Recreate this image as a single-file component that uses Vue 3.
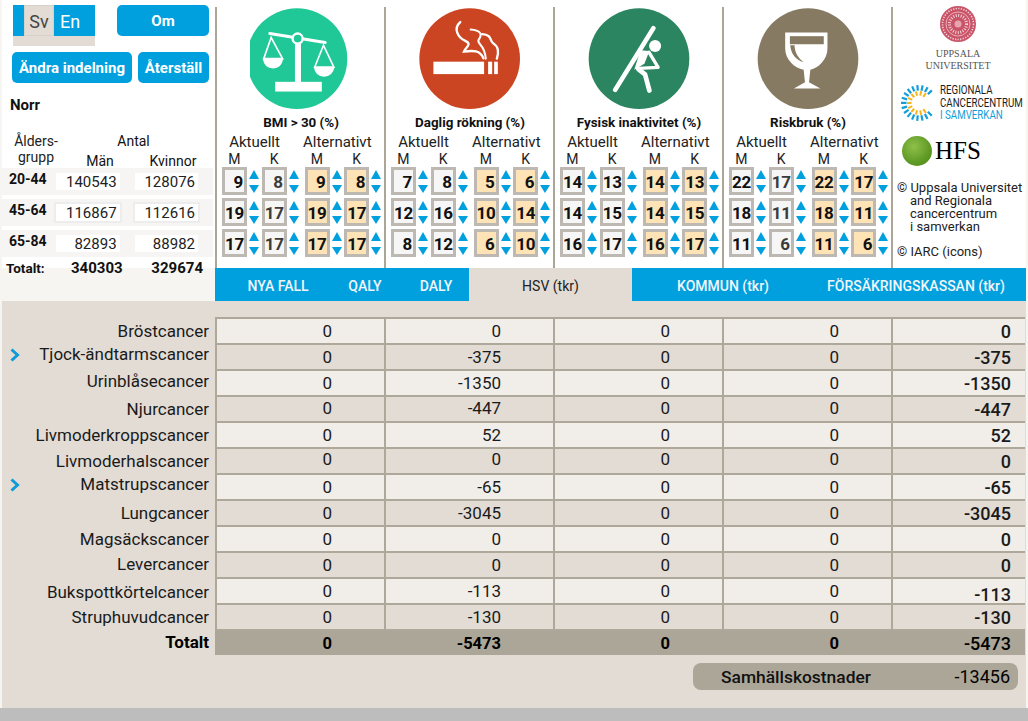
<template>
  <div class="page">
    <div class="top">
      <!-- vänster panel -->
      <div class="side">
        <div class="btn-row first">
          <div class="lang">
            <div class="lang-bar">
              <span class="lang-sv">Sv</span>
              <span class="lang-en">En</span>
            </div>
          </div>
          <button class="btn om">Om</button>
        </div>
        <div class="btn-row second">
          <button class="btn change">Ändra indelning</button>
          <button class="btn reset">Återställ</button>
        </div>
        <div class="region">Norr</div>
        <div class="pop-head">
          <div class="age-head">Ålders-<br />grupp</div>
          <div class="count-head">
            <div class="antal">Antal</div>
            <div class="sex"><span>Män</span><span>Kvinnor</span></div>
          </div>
        </div>
        <div v-for="(p, i) in population" :key="p.age" class="pop-row" :class="{ framed: i === 1 }">
          <b>{{ p.age }}</b>
          <span class="pop-val">{{ p.men }}</span>
          <span class="pop-val">{{ p.women }}</span>
        </div>
        <div class="pop-total">
          <span class="total-label">Totalt:</span>
          <span class="total-val">340303</span>
          <span class="total-val">329674</span>
        </div>
      </div>

      <!-- riskfaktorer -->
      <div v-for="f in factors" :key="f.title" class="factor">
        <svg class="factor-icon" :viewBox="f.box" width="102" height="102">
          <circle :cx="f.cx" cy="175" r="150" :fill="f.color" />
          <g v-if="f.id === 'bmi'">
            <path d="M165 100 L330 127" stroke="#fff" stroke-width="9" stroke-linecap="round" />
            <rect x="240" y="130" width="18" height="116" fill="#fff" />
            <rect x="181" y="244" width="139" height="29" fill="#fff" />
            <circle cx="248" cy="115" r="15" :fill="f.color" stroke="#fff" stroke-width="7" />
            <path d="M169 112 L147 175 H203 Z M325 135 L299 200 H356 Z" fill="none" stroke="#fff" stroke-width="5" />
            <path d="M144 175 H205 Q200 204 175 204 Q149 204 144 175 Z M296 200 H358 Q352 229 327 229 Q301 229 296 200 Z" fill="#fff" />
          </g>
          <g v-else-if="f.id === 'smoke'">
            <rect x="657" y="184" width="151" height="37" fill="#fff" />
            <rect x="820" y="184" width="12" height="37" fill="#fff" />
            <rect x="838" y="184" width="11" height="37" fill="#fff" />
            <path d="M737 66 C715 85 730 112 752 122 C774 132 752 142 748 154 C775 150 797 150 806 174" fill="none" stroke="#fff" stroke-width="7" stroke-linecap="round" />
            <path d="M768 88 C797 90 804 102 792 118 C784 132 810 130 813 175" fill="none" stroke="#fff" stroke-width="6" stroke-linecap="round" />
            <path d="M802 102 C832 104 824 120 834 128 C852 140 852 155 846 175" fill="none" stroke="#fff" stroke-width="7" stroke-linecap="round" />
          </g>
          <g v-else-if="f.id === 'move'">
            <path d="M295 84 L181 268" stroke="#fff" stroke-width="14" stroke-linecap="round" />
            <circle cx="300" cy="137" r="18" fill="#fff" />
            <path d="M256 150 L283 152 L268 190 L238 208 Z" fill="#fff" />
            <path d="M282 156 L309 201 L250 204" fill="none" stroke="#fff" stroke-width="10" stroke-linejoin="round" stroke-linecap="round" />
            <path d="M250 206 L270 222 L283 270" fill="none" stroke="#fff" stroke-width="14" stroke-linecap="round" stroke-linejoin="round" />
          </g>
          <g v-else>
            <path d="M691 97 H817 V145 C817 178 790 203 766 208 L762 245 L796 264 H717 L750 245 L746 208 C718 203 691 178 691 145 Z" fill="#fff" />
            <rect x="705" y="108" width="101" height="24" :fill="f.color" />
            <path d="M706 135 C708 160 722 178 746 186 C726 170 719 152 719 135 Z" :fill="f.color" />
          </g>
        </svg>
        <div class="factor-title">{{ f.title }}</div>
        <div class="heads">
          <span class="head">Aktuellt</span>
          <span class="head alt">Alternativt</span>
        </div>
        <div class="spin-row">
          <span v-for="(s, i) in sexes" :key="i" class="sex-cell" :class="{ 'group-start': i === 2 }">{{ s }}</span>
        </div>
        <div v-for="(row, r) in f.values" :key="r" class="spin-row boxes">
          <div v-for="(v, i) in row" :key="i" class="spin" :class="{ 'group-start': i === 2 }">
            <div class="box" :class="{ orange: i > 1, dim: f.dim && i === 1 }">{{ v }}</div>
            <div class="arrows"><i class="up"></i><i class="down"></i></div>
          </div>
        </div>
      </div>

      <!-- logotyper -->
      <div class="logos">
        <svg class="seal" viewBox="0 0 36 36" width="36" height="36">
          <circle cx="18" cy="18" r="18" fill="#c95468" />
          <circle cx="18" cy="18" r="15.5" fill="none" stroke="#f3d5da" stroke-width="1.6" stroke-dasharray="1.2 1.4" />
          <circle cx="18" cy="18" r="12" fill="none" stroke="#f0c6cd" stroke-width="0.8" />
          <circle cx="18" cy="18" r="8.5" fill="none" stroke="#f3d5da" stroke-width="3" stroke-dasharray="1 1.5" />
          <circle cx="18" cy="18" r="3.5" fill="#e6a5b0" />
        </svg>
        <div class="uu">UPPSALA<br />UNIVERSITET</div>
        <div class="rcc">
          <svg viewBox="-18 -18 36 36" width="36" height="36">
            <rect v-for="(a, i) in outerSpokes" :key="'o' + i" x="12.5" y="-1.1" width="5.5" height="2.2" fill="#129ed9" :transform="`rotate(${a})`" />
            <rect v-for="(a, i) in innerSpokes" :key="'n' + i" x="7.5" y="-1" width="4.5" height="2" fill="#f8b31c" :transform="`rotate(${a})`" />
          </svg>
          <div class="rcc-text">REGIONALA<br />CANCERCENTRUM<br /><span>I SAMVERKAN</span></div>
        </div>
        <div class="hfs">
          <span class="ball"></span>
          <span class="hfs-text">HFS</span>
        </div>
        <div class="credit">
          <div>© Uppsala Universitet</div>
          <div class="indent">and Regionala<br />cancercentrum<br />i samverkan</div>
          <div class="iarc">© IARC (icons)</div>
        </div>
      </div>
    </div>

    <!-- flikar -->
    <div class="tabs">
      <div v-for="t in tabs" :key="t.id" class="tab" :class="[t.id, { active: t.active }]">{{ t.label }}</div>
    </div>

    <div class="body">
      <div class="grid">
        <template v-for="(r, i) in rows" :key="r.name">
          <div class="name-cell" :class="{ bold: r.total }">
            <svg v-if="r.more" class="chevron" viewBox="0 0 10 14" width="10" height="14">
              <path d="M1.5 1.5 L7.5 7 L1.5 12.5" fill="none" stroke="#0f9ad8" stroke-width="3" />
            </svg>
            <span class="name" :style="{ transform: `translateY(${r.dy}px)` }">{{ r.name }}</span>
          </div>
          <div
            v-for="(v, c) in r.vals"
            :key="c"
            class="cell"
            :class="{ even: i % 2 === 1, total: r.total, sum: c === 4 }"
          >
            <span :style="{ transform: `translateY(${c === 4 ? r.sumDy : r.valDy}px)` }">{{ v }}</span>
          </div>
        </template>
      </div>
      <div class="society">
        <span class="society-label">Samhällskostnader</span>
        <span class="society-val">-13456</span>
      </div>
    </div>
    <div class="foot"></div>
  </div>
</template>

<script setup>
const sexes = ['M', 'K', 'M', 'K']

const population = [
  { age: '20-44', men: 140543, women: 128076 },
  { age: '45-64', men: 116867, women: 112616 },
  { age: '65-84', men: 82893, women: 88982 }
]

const factors = [
  {
    id: 'bmi', title: 'BMI > 30 (%)', color: '#20c897', box: '106 24 304 304', cx: 246, dim: true,
    values: [[9, 8, 9, 8], [19, 17, 19, 17], [17, 17, 17, 17]]
  },
  {
    id: 'smoke', title: 'Daglig rökning (%)', color: '#cc4522', box: '614 24 304 304', cx: 765,
    values: [[7, 8, 5, 6], [12, 16, 10, 14], [8, 12, 6, 10]]
  },
  {
    id: 'move', title: 'Fysisk inaktivitet (%)', color: '#2a8560', box: '100 24 304 304', cx: 252,
    values: [[14, 13, 14, 13], [14, 15, 14, 15], [16, 17, 16, 17]]
  },
  {
    id: 'glass', title: 'Riskbruk (%)', color: '#877a62', box: '607 24 304 304', cx: 759, dim: true,
    values: [[22, 17, 22, 17], [18, 11, 18, 11], [11, 6, 11, 6]]
  }
]

// C-formad logotyp, ekrarna går runt vänster sida
const outerSpokes = Array.from({ length: 17 }, (_, i) => 45 + i * 16.9)
const innerSpokes = Array.from({ length: 11 }, (_, i) => 55 + i * 25)

const tabs = [
  { id: 't-fall', label: 'NYA FALL' },
  { id: 't-qaly', label: 'QALY' },
  { id: 't-daly', label: 'DALY' },
  { id: 't-hsv', label: 'HSV (tkr)', active: true },
  { id: 't-kommun', label: 'KOMMUN (tkr)' },
  { id: 't-fk', label: 'FÖRSÄKRINGSKASSAN (tkr)' }
]

const row = (name, v, dy, valDy = 0, sumDy = 0, more = false) => ({
  name, vals: [0, v, 0, 0, v], dy, valDy, sumDy, more
})

const rows = [
  row('Bröstcancer', 0, 1),
  row('Tjock-ändtarmscancer', -375, -2, 0, 0, true),
  row('Urinblåsecancer', -1350, -1),
  row('Njurcancer', -447, 1, -1),
  row('Livmoderkroppscancer', 52, 1),
  row('Livmoderhalscancer', 0, 1, -2, 0),
  row('Matstrupscancer', -65, -2, 0, 0, true),
  row('Lungcancer', -3045, 1),
  row('Magsäckscancer', 0, 1),
  row('Levercancer', 0, 0),
  row('Bukspottkörtelcancer', -113, 2, 0, 3),
  row('Struphuvudcancer', -130, 1),
  { name: 'Totalt', vals: [0, -5473, 0, 0, -5473], dy: 0, valDy: 0, sumDy: 0, total: true }
]
</script>

<style>
html, body {
  margin: 0;
  background: #f7f5f2;
}
</style>

<style scoped>
.page {
  width: 1028px;
  height: 721px;
  padding-left: 2px;
  box-sizing: border-box;
  overflow: hidden;
  font-family: Roboto, "Liberation Sans", sans-serif;
  color: #111;
  background: #f7f5f2;
  display: flex;
  flex-direction: column;
}

.top {
  display: flex;
  height: 268px;
  width: 1024px;
  background: #fff;
}

.side {
  width: 213px;
  flex: none;
}

.btn-row {
  display: flex;
  padding-left: 10px;
}

.btn-row.first {
  padding-top: 5px;
  height: 52px;
  box-sizing: border-box;
  padding-left: 11px;
}

.btn-row.second {
  gap: 6px;
}

.lang {
  width: 82px;
  height: 41px;
  background: #e2dcd5;
}

.lang-bar {
  display: flex;
  height: 31px;
  padding-left: 11px;
  background: #00a0df;
  font-size: 18px;
  line-height: 33px;
}

.lang-sv {
  width: 30px;
  text-align: center;
  color: #444;
  background: #e2dcd5;
  box-shadow: inset 0 0 0 1px #d4d2cc;
}

.lang-en {
  flex: 1;
  text-align: center;
  color: #fff;
  padding-right: 9px;
}

.btn {
  border: none;
  padding: 0;
  height: 31px;
  border-radius: 5px;
  background: #00a0df;
  color: #fff;
  font-family: inherit;
  font-size: 15px;
  font-weight: 700;
}

.om {
  width: 92px;
  margin-left: 22px;
}

.change {
  width: 120px;
}

.reset {
  width: 71px;
}

.region {
  margin: 13px 0 0 8px;
  font-size: 15px;
  font-weight: 700;
  line-height: 18px;
}

.pop-head {
  display: flex;
  height: 35px;
  margin-top: 19px;
  font-size: 14px;
  line-height: 16px;
}

.age-head {
  width: 64px;
  padding-left: 4px;
  box-sizing: border-box;
  text-align: center;
  color: #222;
}

.count-head {
  flex: 1;
}

.antal {
  text-align: center;
  font-size: 14px;
  margin-right: 14px;
}

.sex {
  display: flex;
  margin-top: 4px;
  font-size: 14px;
}

.sex span:first-child {
  width: 68px;
  text-align: center;
}

.sex span:last-child {
  width: 78px;
  text-align: center;
}

.pop-row {
  display: flex;
  align-items: center;
  width: 211px;
  height: 27px;
  margin-bottom: 4px;
  background: #f7f5f3;
  font-size: 15px;
}

.pop-row b {
  width: 57px;
  padding-left: 7px;
  box-sizing: border-box;
  font-size: 14px;
  margin-top: -5px;
}

.pop-val {
  width: 67px;
  height: 17px;
  line-height: 18px;
  margin-right: 15px;
  padding-right: 3px;
  box-sizing: border-box;
  text-align: right;
  background: #fff;
  color: #222;
}

.framed .pop-val {
  box-shadow: 0 0 0 2px #eeeded;
}

.pop-total {
  display: flex;
  align-items: center;
  height: 18px;
  margin-top: -2px;
  font-weight: 700;
  font-size: 15px;
}

.total-label {
  width: 70px;
  padding-left: 4px;
  box-sizing: border-box;
  font-size: 13.5px;
}

.total-val {
  width: 81px;
  margin-left: -1px;
  padding-right: 30px;
  box-sizing: border-box;
  text-align: right;
}

.total-val:last-child {
  margin-left: -1px;
  padding-right: 0;
  width: 52px;
}

.factor {
  width: 169px;
  height: 261px;
  margin-top: 7px;
  flex: none;
  box-sizing: border-box;
  border-left: 2px solid #aca698;
  padding-left: 5px;
}

.factor-icon {
  display: block;
  margin: 1px 0 0 28px;
}

.factor-title {
  width: 158px;
  margin-top: 5px;
  text-align: center;
  font-size: 13.4px;
  font-weight: 700;
  line-height: 16px;
  white-space: nowrap;
}

.heads {
  display: flex;
  margin-top: 2px;
  height: 18px;
  font-size: 15px;
  line-height: 18px;
  color: #222;
}

.head {
  width: 65px;
  text-align: center;
}

.head.alt {
  margin-left: 16px;
  white-space: nowrap;
}

.spin-row {
  display: flex;
}

.sex-cell {
  width: 40px;
  height: 16px;
  padding-right: 15px;
  box-sizing: border-box;
  text-align: center;
  font-size: 14px;
  line-height: 17px;
  color: #222;
}

.group-start {
  margin-left: 3px;
}

.boxes {
  height: 28px;
  margin-bottom: 3px;
}

.spin {
  display: flex;
  width: 40px;
}

.box {
  width: 25px;
  height: 28px;
  box-sizing: border-box;
  border: 3px solid #bdb8b2;
  background: #f6f6f6;
  text-align: right;
  padding-right: 1px;
  font-size: 17px;
  font-weight: 700;
  line-height: 24px;
  color: #111;
  letter-spacing: -0.3px;
}

.box.orange {
  background: #fde3b5;
}

.box.dim {
  color: #3b3b3b;
}

.arrows {
  display: flex;
  flex-direction: column;
  justify-content: space-between;
  height: 23px;
  margin: 3px 0 0 2px;
}

.arrows i {
  display: block;
  width: 0;
  height: 0;
  border-left: 5px solid transparent;
  border-right: 5px solid transparent;
}

.arrows .up {
  border-bottom: 9px solid #00a0df;
}

.arrows .down {
  border-top: 8px solid #00a0df;
}

.logos {
  width: 135px;
  height: 261px;
  margin-top: 7px;
  flex: none;
  box-sizing: border-box;
  border-left: 2px solid #aca698;
  text-align: center;
}

.seal {
  display: block;
  margin: -1px 0 0 47px;
}

.uu {
  width: 130px;
  margin-top: 6px;
  font-family: "Liberation Serif", serif;
  font-size: 10px;
  line-height: 12px;
  color: #555;
}

.rcc {
  display: flex;
  align-items: center;
  gap: 3px;
  margin: 12px 0 0 8px;
}

.rcc svg {
  flex: none;
}

.rcc-text {
  text-align: left;
  font-size: 12px;
  line-height: 12.5px;
  white-space: nowrap;
  color: #1d1d1d;
  transform: scaleX(0.81);
  transform-origin: left center;
}

.rcc-text span {
  color: #129ed9;
}

.hfs {
  display: flex;
  align-items: center;
  margin: 14px 0 0 9px;
}

.ball {
  width: 30px;
  height: 30px;
  border-radius: 50%;
  background: radial-gradient(circle at 40% 35%, #8fc04a, #5f9a25 60%, #4c8418);
}

.hfs-text {
  font-family: "Liberation Serif", serif;
  font-size: 25px;
  line-height: 30px;
  color: #000;
  margin-left: 3px;
}

.credit {
  margin: 15px 0 0 4px;
  text-align: left;
  font-size: 13px;
  line-height: 13.3px;
  color: #222;
  white-space: nowrap;
}

.indent {
  padding-left: 13px;
}

.iarc {
  margin-top: 11px;
}

.tabs {
  display: flex;
  width: 811px;
  height: 33px;
  margin-left: 213px;
  flex: none;
  background: #00a0df;
  color: #f2f6f8;
  font-size: 14px;
  font-weight: 500;
  line-height: 37px;
  text-align: center;
  white-space: nowrap;
}

.t-fall {
  width: 126px;
}

.t-qaly {
  width: 48px;
}

.t-daly {
  width: 66px;
  margin-left: 14px;
}

.t-hsv {
  width: 163px;
}

.t-kommun {
  width: 182px;
}

.t-fk {
  width: 212px;
  padding-right: 8px;
  box-sizing: border-box;
}

.tab.active {
  background: #e2dcd5;
  color: #222;
  font-weight: 400;
}

.body {
  flex: 1;
  width: 1024px;
  padding-top: 16px;
  box-sizing: border-box;
  background: #e2dcd5;
}

.grid {
  display: grid;
  grid-template-columns: 213px repeat(4, 169px) 134px;
  grid-auto-rows: 26px;
}

.name-cell {
  display: flex;
  align-items: center;
  padding: 0 6px 0 8px;
  font-size: 17px;
  white-space: nowrap;
  color: #1a1a1a;
}

.name-cell.bold {
  font-weight: 700;
  color: #000;
}

.chevron {
  margin-top: -3px;
  flex: none;
}

.name {
  margin-left: auto;
}

.cell {
  display: flex;
  align-items: center;
  justify-content: flex-end;
  padding-right: 52px;
  box-sizing: border-box;
  border-left: 2px solid #aea89a;
  border-top: 2px solid #aea89a;
  background: #f1eeea;
  font-size: 17px;
  color: #1a1a1a;
}

.cell.even {
  background: #e2dcd5;
}

.cell.sum {
  padding-right: 14px;
  font-weight: 500;
  font-size: 18px;
}

.cell.total {
  background: #aca698;
  border-left-color: #aca698;
  font-weight: 700;
  font-size: 16.5px;
  color: #000;
}

.cell.total.sum {
  font-weight: 500;
  font-size: 18px;
}

.society {
  display: flex;
  justify-content: space-between;
  align-items: center;
  width: 325px;
  height: 27px;
  margin: 8px 0 0 691px;
  padding: 0 8px 0 28px;
  box-sizing: border-box;
  border-radius: 8px;
  background: #aca698;
}

.society-label {
  font-size: 17.4px;
  font-weight: 500;
}

.society-val {
  font-size: 18px;
  color: #000;
}

.foot {
  height: 13px;
  margin-left: -2px;
  flex: none;
  background: #bdbdbd;
}
</style>
